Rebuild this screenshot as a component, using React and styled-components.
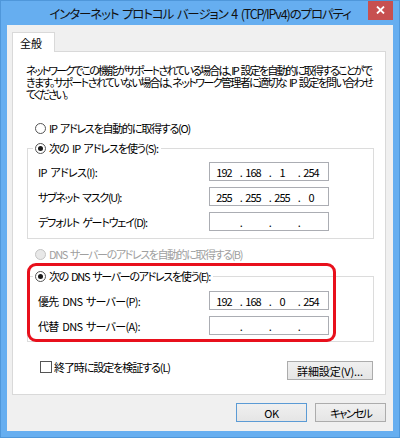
import React from "react";
import styled, { createGlobalStyle } from "styled-components";

const GlobalStyle = createGlobalStyle`
  html, body { margin: 0; padding: 0; background: #ffffff; }
  body { font-family: "Noto Sans CJK JP", "Noto Sans", sans-serif; }
`;

const Window = styled.div`
  box-sizing: border-box;
  width: 400px;
  height: 438px;
  display: flex;
  flex-direction: column;
  padding: 0 6px 6px 6px;
  background: #66aef0;
  border: 1px solid #4f97da;
  font-family: "Noto Sans CJK JP", sans-serif;
  font-feature-settings: "palt";
  font-size: 11px;
  word-spacing: 2px;
  color: #000;
  overflow: hidden;
`;

const TitleBar = styled.div`
  height: 24px;
  display: grid;
  grid-template-columns: 25px 1fr 25px;
  align-items: start;
  flex: 0 0 auto;
`;

const Title = styled.div`
  height: 24px;
  line-height: 26px;
  font-size: 12.5px;
  letter-spacing: -1.14px;
  text-align: center;
  white-space: nowrap;
  color: #111;
`;

const CloseButton = styled.div`
  width: 25px;
  height: 20px;
  margin-top: -1px;
  background: #c75050;
  display: flex;
  align-items: center;
  justify-content: center;
`;

const Client = styled.div`
  flex: 1;
  background: #f0f0f0;
  display: flex;
  flex-direction: column;
  padding: 7px 7px 8px 5px;
`;

const TabStrip = styled.div`
  display: flex;
`;

const Tab = styled.div`
  box-sizing: border-box;
  width: 43px;
  height: 20px;
  margin-bottom: -1px;
  padding-left: 7px;
  position: relative;
  z-index: 1;
  background: #fff;
  border: 1px solid #d9d9d9;
  border-bottom: none;
  line-height: 21px;
`;

const Panel = styled.div`
  display: flex;
  flex-direction: column;
  background: #fff;
  border: 1px solid #d9d9d9;
  padding: 12px 11px 14px 14px;
`;

const Intro = styled.div`
  margin-left: -1px;
  line-height: 12px;
`;

const Line = styled.div`
  white-space: nowrap;
  letter-spacing: ${(p) => p.$ls}px;
`;

const OptionRow = styled.label`
  display: flex;
  align-items: center;
  gap: 3px;
  height: 14px;
  margin-top: ${(p) => p.$top || 0}px;
  margin-left: ${(p) => p.$indent ?? 8}px;
  color: ${(p) => (p.$disabled ? "#a0a0a0" : "#000")};
  white-space: nowrap;
  letter-spacing: ${(p) => p.$ls}px;
`;

const RadioMark = styled.span`
  box-sizing: border-box;
  width: 11px;
  height: 11px;
  border-radius: 50%;
  border: 1px solid ${(p) => (p.$disabled ? "#c4c4c4" : "#555")};
  background: ${(p) => (p.$disabled ? "#e8e8e8" : "#fff")};
  display: flex;
  align-items: center;
  justify-content: center;
  flex: 0 0 auto;

  &::after {
    content: "";
    width: 5px;
    height: 5px;
    border-radius: 50%;
    background: #1a1a1a;
    display: ${(p) => (p.$checked ? "block" : "none")};
  }
`;

const CheckMark = styled.span`
  box-sizing: border-box;
  width: 12px;
  height: 12px;
  border: 1px solid #555;
  background: #fff;
  flex: 0 0 auto;
`;

const Section = styled.div`
  position: relative;
  margin-top: ${(p) => p.$top || 0}px;
`;

const Group = styled.fieldset`
  margin: 0;
  min-width: 0;
  border: 1px solid #dcdcdc;
  padding: ${(p) => p.$padTop}px 0 ${(p) => p.$padBottom}px 10px;
  display: flex;
  flex-direction: column;
  gap: 6px;
`;

const Legend = styled.legend`
  padding: 0 3px 0 2px;
  margin-left: -5px;
  height: 14px;
`;

const FieldRow = styled.div`
  display: grid;
  grid-template-columns: 171px 120px;
  align-items: center;
  height: 19px;
  white-space: nowrap;
`;

const FieldLabel = styled.span`
  letter-spacing: ${(p) => p.$ls}px;
`;

const IpBox = styled.div`
  box-sizing: border-box;
  width: 120px;
  height: 19px;
  border: 1px solid #abadb3;
  background: #fff;
  display: flex;
  align-items: center;
  padding-left: 3px;
  letter-spacing: -0.9px;
`;

const Octet = styled.span`
  display: flex;
  width: 29px;
`;

const OctetValue = styled.span`
  width: 22px;
  text-align: center;
`;

const OctetDot = styled.span`
  width: 7px;
  text-align: right;
`;

const Highlight = styled.div`
  position: absolute;
  box-sizing: border-box;
  top: -6px;
  left: 0;
  bottom: 0;
  width: 309px;
  border: 3px solid #e8101c;
  border-radius: 9px;
  pointer-events: none;
`;

const FooterRow = styled.div`
  display: flex;
  align-items: flex-start;
  justify-content: space-between;
  margin-top: 19px;
  margin-right: 1px;
`;

const CheckRow = styled.label`
  display: flex;
  align-items: center;
  gap: 2px;
  height: 12px;
  margin-left: 13px;
  letter-spacing: -1.07px;
  white-space: nowrap;
`;

const Button = styled.button`
  box-sizing: border-box;
  width: ${(p) => p.$width}px;
  height: 19px;
  padding: 0;
  font-family: inherit;
  font-feature-settings: "palt";
  font-size: 11px;
  letter-spacing: ${(p) => p.$ls || 0}px;
  color: #000;
  background: linear-gradient(#f0f0f0, #e5e5e5);
  border: 1px solid ${(p) => (p.$default ? "#5b9bd5" : "#acacac")};
  white-space: nowrap;
`;

const ButtonRow = styled.div`
  display: flex;
  justify-content: flex-end;
  gap: 8px;
  margin-top: 8px;
`;

function Radio({ checked, disabled, children, top, indent, ls }) {
  return (
    <OptionRow $top={top} $indent={indent} $disabled={disabled} $ls={ls}>
      <RadioMark $checked={checked} $disabled={disabled} />
      <span>{children}</span>
    </OptionRow>
  );
}

function IpField({ value }) {
  const parts = value ? value.split(".") : ["", "", "", ""];
  return (
    <IpBox>
      {parts.map((p, i) => (
        <Octet key={i}>
          <OctetValue>{p}</OctetValue>
          {i < 3 && <OctetDot>.</OctetDot>}
        </Octet>
      ))}
    </IpBox>
  );
}

function Field({ label, value, ls }) {
  return (
    <FieldRow>
      <FieldLabel $ls={ls}>{label}</FieldLabel>
      <IpField value={value} />
    </FieldRow>
  );
}

export default function App() {
  return (
    <>
      <GlobalStyle />
      <Window>
        <TitleBar>
          <span />
          <Title>インターネット プロトコル バージョン 4 (TCP/IPv4)のプロパティ</Title>
          <CloseButton>
            <svg width="9" height="8" viewBox="0 0 9 8">
              <path d="M1 0.5 L8 7.5 M8 0.5 L1 7.5" stroke="#fff" strokeWidth="1.8" />
            </svg>
          </CloseButton>
        </TitleBar>
        <Client>
          <TabStrip>
            <Tab>全般</Tab>
          </TabStrip>
          <Panel>
            <Intro>
              <Line $ls={-1.82}>ネットワークでこの機能がサポートされている場合は、IP 設定を自動的に取得することがで</Line>
              <Line $ls={-1.6}>きます。サポートされていない場合は、ネットワーク管理者に適切な IP 設定を問い合わせ</Line>
              <Line $ls={-2.2}>てください。</Line>
            </Intro>
            <Radio top={21} ls={-1.23}>IP アドレスを自動的に取得する(O)</Radio>
            <Section $top={6}>
              <Group $padTop={7} $padBottom={7}>
                <Legend>
                  <Radio checked indent={0} ls={-1.04}>次の IP アドレスを使う(S):</Radio>
                </Legend>
                <Field label="IP アドレス(I):" value="192.168.1.254" ls={-0.72} />
                <Field label="サブネット マスク(U):" value="255.255.255.0" ls={-1.32} />
                <Field label="デフォルト ゲートウェイ(D):" ls={-1.19} />
              </Group>
            </Section>
            <Radio top={8} disabled ls={-1.41}>DNS サーバーのアドレスを自動的に取得する(B)</Radio>
            <Section $top={8}>
              <Group $padTop={8} $padBottom={6}>
                <Legend>
                  <Radio checked indent={0} ls={-1.32}>次の DNS サーバーのアドレスを使う(E):</Radio>
                </Legend>
                <Field label="優先 DNS サーバー(P):" value="192.168.0.254" ls={-0.72} />
                <Field label="代替 DNS サーバー(A):" ls={-0.72} />
              </Group>
              <Highlight />
            </Section>
            <FooterRow>
              <CheckRow>
                <CheckMark />
                <span>終了時に設定を検証する(L)</span>
              </CheckRow>
              <Button $width={86} $ls={-0.1}>詳細設定(V)...</Button>
            </FooterRow>
          </Panel>
          <ButtonRow>
            <Button $width={71} $default $ls={-0.5}>OK</Button>
            <Button $width={71} $ls={-1.8}>キャンセル</Button>
          </ButtonRow>
        </Client>
      </Window>
    </>
  );
}
